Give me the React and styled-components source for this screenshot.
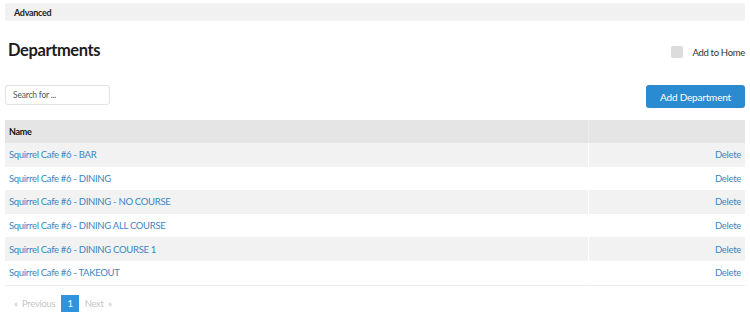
import styled, { createGlobalStyle } from "styled-components";

const Global = createGlobalStyle`
  body {
    margin: 0;
    background: #fff;
    font-family: Lato, "Noto Sans", sans-serif;
    color: #222;
    letter-spacing: -0.3px;
  }
`;

const Page = styled.div`
  padding: 3px 5px 0;
`;

// collapsed section header
const SectionBar = styled.div`
  height: 18px;
  background: #f1f1f1;
  border-radius: 3px;
  display: flex;
  align-items: center;
  padding-left: 9px;
  font-size: 9px;
  font-weight: 700;
`;

const HeaderRow = styled.div`
  display: flex;
  justify-content: space-between;
  align-items: center;
  margin-top: 19px;
  padding-left: 3px;
`;

const Title = styled.h1`
  margin: 0;
  font-size: 16.5px;
  font-weight: 700;
  letter-spacing: -0.4px;
  color: #1c1c1c;
`;

const HomeToggle = styled.label`
  display: flex;
  align-items: center;
  gap: 9px;
  font-size: 9.5px;
  color: #333;
  margin-top: 4px;
`;

const Box = styled.span`
  width: 12px;
  height: 12px;
  border-radius: 2px;
  background: #dcdcdc;
`;

const Toolbar = styled.div`
  display: flex;
  justify-content: space-between;
  align-items: flex-start;
  margin-top: 25px;
`;

const Search = styled.input`
  width: 105px;
  height: 20px;
  box-sizing: border-box;
  border: 1px solid #e2e2e2;
  border-radius: 3px;
  padding: 0 7px;
  font-family: inherit;
  font-size: 8.5px;
  letter-spacing: -0.2px;
  outline: none;
  &::placeholder {
    color: #555;
  }
`;

const AddButton = styled.button`
  width: 99px;
  height: 23px;
  border: none;
  border-radius: 3px;
  background: #2b8bd0;
  color: #fff;
  font-family: inherit;
  font-size: 10px;
  letter-spacing: -0.2px;
`;

const Table = styled.table`
  width: 100%;
  margin-top: 12px;
  border-collapse: collapse;
  font-size: 9.5px;
  border-bottom: 1px solid #ececec;
`;

const Th = styled.th`
  height: 23px;
  background: #e5e5e5;
  text-align: left;
  padding: 0 4px;
  font-weight: 700;
  font-size: 9px;
  color: #111;
  & + & {
    border-left: 1px solid #ececec;
    width: 148px;
  }
`;

const Tr = styled.tr`
  background: ${(p) => (p.$odd ? "#f2f2f2" : "#fff")};
`;

const Td = styled.td`
  height: 23.6px;
  padding: 0 4px;
  color: #3986c2;
  text-align: ${(p) => (p.$right ? "right" : "left")};
  & + & {
    border-left: 1px solid ${(p) => (p.$odd ? "#f6f6f6" : "#fff")};
  }
`;

const Pager = styled.div`
  display: flex;
  align-items: center;
  gap: 6px;
  margin-top: 9px;
  padding-left: 9px;
  font-size: 9.5px;
  color: #c6c6c6;
`;

const PageItem = styled.span`
  ${(p) =>
    p.$active &&
    `
    background: #2e94df;
    color: #fff;
    height: 17px;
    line-height: 17px;
    padding: 0 6px;
    text-align: center;
  `}
`;

const rows = [
  "Squirrel Cafe #6 - BAR",
  "Squirrel Cafe #6 - DINING",
  "Squirrel Cafe #6 - DINING - NO COURSE",
  "Squirrel Cafe #6 - DINING ALL COURSE",
  "Squirrel Cafe #6 - DINING COURSE 1",
  "Squirrel Cafe #6 - TAKEOUT",
];

export default function App() {
  return (
    <Page>
      <Global />
      <SectionBar>Advanced</SectionBar>
      <HeaderRow>
        <Title>Departments</Title>
        <HomeToggle>
          <Box />
          Add to Home
        </HomeToggle>
      </HeaderRow>
      <Toolbar>
        <Search placeholder="Search for ..." />
        <AddButton>Add Department</AddButton>
      </Toolbar>
      <Table>
        <thead>
          <tr>
            <Th>Name</Th>
            <Th />
          </tr>
        </thead>
        <tbody>
          {rows.map((name, i) => (
            <Tr key={name} $odd={i % 2 === 0}>
              <Td>{name}</Td>
              <Td $right $odd={i % 2 === 0}>Delete</Td>
            </Tr>
          ))}
        </tbody>
      </Table>
      <Pager>
        <PageItem>«&nbsp; Previous</PageItem>
        <PageItem $active>1</PageItem>
        <PageItem>Next &nbsp;»</PageItem>
      </Pager>
    </Page>
  );
}
